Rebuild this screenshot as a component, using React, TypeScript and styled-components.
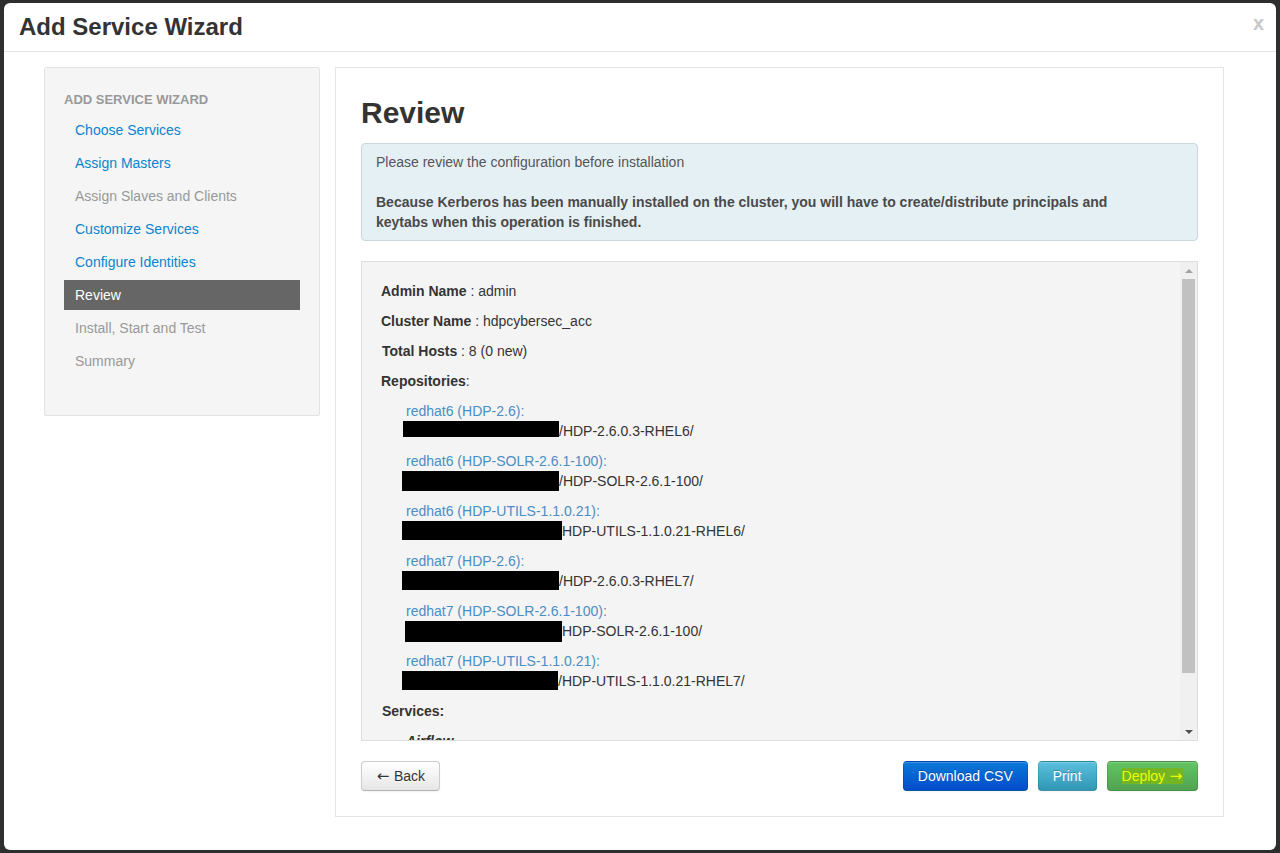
import React from 'react';
import styled, { createGlobalStyle, css } from 'styled-components';

const GlobalStyle = createGlobalStyle`
  html, body { margin: 0; padding: 0; }
  body {
    background: #2e2e2e;
    font-family: "Liberation Sans", Arial, Helvetica, sans-serif;
    font-size: 14px;
    line-height: 20px;
    color: #333;
  }
  * { box-sizing: border-box; }
`;

const Backdrop = styled.div`
  width: 1280px;
  height: 853px;
  padding: 3px 4px 3px 4px;
  display: flex;
`;

const Modal = styled.div`
  flex: 1;
  background: #fff;
  border-radius: 6px;
  display: flex;
  flex-direction: column;
  overflow: hidden;
`;

const Header = styled.header`
  display: flex;
  justify-content: space-between;
  align-items: flex-start;
  padding: 9px 12px 9px 15px;
  border-bottom: 1px solid #e5e5e5;
`;

const Title = styled.h3`
  margin: 0;
  font-size: 24px;
  line-height: 30px;
  font-weight: bold;
  color: #333;
`;

const Close = styled.span`
  font-size: 20px;
  line-height: 22px;
  font-weight: bold;
  color: #c8c8c8;
`;

const Body = styled.div`
  flex: 1;
  display: grid;
  grid-template-columns: 276px 889px;
  column-gap: 15px;
  align-items: start;
  padding: 15px 0 0 40px;
`;

const Well = styled.nav`
  background: #f5f5f5;
  border: 1px solid #e3e3e3;
  border-radius: 2px;
  padding: 19px 19px 39px;
  display: flex;
  flex-direction: column;
  gap: 3px;
`;

const NavHeader = styled.div`
  font-size: 13px;
  font-weight: bold;
  text-transform: uppercase;
  color: #999;
  line-height: 20px;
  padding: 3px 0 1px;
  margin-bottom: 1px;
`;

type NavState = 'link' | 'disabled' | 'active';

const NavItem = styled.div<{ $state: NavState }>`
  height: 30px;
  padding: 5px 11px;
  line-height: 20px;
  font-size: 14px;
  ${({ $state }) =>
    $state === 'active'
      ? css`background: #666; color: #fff;`
      : $state === 'link'
      ? css`color: #0a84cf;`
      : css`color: #999;`}
`;

const Panel = styled.section`
  border: 1px solid #e5e5e5;
  background: #fff;
  padding: 25px;
`;

const PageTitle = styled.h2`
  margin: 0 0 10px;
  font-size: 30px;
  line-height: 40px;
  font-weight: bold;
  color: #333;
`;

const Alert = styled.div`
  background: #e5f0f5;
  border: 1px solid #c9d7de;
  border-radius: 4px;
  padding: 8px 35px 8px 14px;
  color: #555;
  margin-bottom: 20px;
  b { color: #4a4a4a; }
`;

const ReviewBox = styled.div`
  height: 480px;
  display: flex;
  border: 1px solid #dedede;
  background: #f4f4f4;
  overflow: hidden;
`;

const ReviewContent = styled.div`
  flex: 1;
  overflow: hidden;
  padding: 9px 19px;
`;

const Row = styled.p<{ $shift?: number }>`
  margin: 10px 0;
  line-height: 20px;
  padding-left: ${({ $shift }) => $shift || 0}px;
  b { font-weight: bold; color: #333; }
`;

const Indent = styled.div`
  padding-left: 25px;
`;

const RepoEntry = styled.div`
  margin: 10px 0;
`;

const RepoLink = styled.div`
  color: #4a8ec4;
  line-height: 20px;
`;

const PathLine = styled.div`
  display: flex;
  align-items: flex-start;
  height: 20px;
  line-height: 20px;
  color: #333;
`;

const Redact = styled.span<{ $w: number; $h: number; $dx: number }>`
  display: block;
  flex: none;
  background: #000;
  width: ${({ $w }) => $w}px;
  height: ${({ $h }) => $h}px;
  margin-left: ${({ $dx }) => $dx}px;
`;

const Scrollbar = styled.div`
  width: 17px;
  flex: none;
  background: #f0f0f0;
  display: flex;
  flex-direction: column;
  align-items: center;
`;

const ArrowBtn = styled.div`
  width: 17px;
  height: 17px;
  display: flex;
  align-items: center;
  justify-content: center;
`;

const Triangle = styled.span<{ $dir: 'up' | 'down'; $color: string }>`
  width: 0;
  height: 0;
  border-left: 4px solid transparent;
  border-right: 4px solid transparent;
  ${({ $dir, $color }) =>
    $dir === 'up'
      ? css`border-bottom: 4px solid ${$color};`
      : css`border-top: 4px solid ${$color};`}
`;

const Thumb = styled.div`
  width: 13px;
  height: 394px;
  background: #c1c1c1;
`;

const Track = styled.div`
  flex: 1;
`;

const ButtonRow = styled.div`
  margin-top: 20px;
  display: flex;
  justify-content: space-between;
`;

const ButtonGroup = styled.div`
  display: flex;
  gap: 10px;
`;

type Variant = 'default' | 'primary' | 'info' | 'success';

const variants: Record<Variant, ReturnType<typeof css>> = {
  default: css`
    color: #333;
    background-image: linear-gradient(to bottom, #ffffff, #e6e6e6);
    border-color: #cccccc #cccccc #b3b3b3;
    text-shadow: 0 1px 1px rgba(255, 255, 255, 0.75);
  `,
  primary: css`
    color: #fff;
    background-image: linear-gradient(to bottom, #0a79d6, #004ccb);
    border-color: rgba(0, 0, 0, 0.1) rgba(0, 0, 0, 0.1) rgba(0, 0, 0, 0.25);
    text-shadow: 0 -1px 0 rgba(0, 0, 0, 0.25);
  `,
  info: css`
    color: #fff;
    background-image: linear-gradient(to bottom, #5bc0de, #2f96b4);
    border-color: rgba(0, 0, 0, 0.1) rgba(0, 0, 0, 0.1) rgba(0, 0, 0, 0.25);
    text-shadow: 0 -1px 0 rgba(0, 0, 0, 0.25);
  `,
  success: css`
    color: #fff;
    background-image: linear-gradient(to bottom, #62c462, #51a351);
    border-color: rgba(0, 0, 0, 0.1) rgba(0, 0, 0, 0.1) rgba(0, 0, 0, 0.25);
  `,
};

const Button = styled.button<{ $variant: Variant }>`
  font-family: "Liberation Sans", Arial, Helvetica, sans-serif;
  font-size: 14px;
  line-height: 20px;
  height: 30px;
  padding: 4px 14px;
  border: 1px solid;
  border-radius: 4px;
  box-shadow: inset 0 1px 0 rgba(255, 255, 255, 0.2), 0 1px 2px rgba(0, 0, 0, 0.05);
  cursor: pointer;
  white-space: nowrap;
  ${({ $variant }) => variants[$variant]}
`;

const Arrow = styled.span`
  display: inline-block;
  width: 14px;
  text-align: center;
  font-family: "DejaVu Sans", "Liberation Sans", sans-serif;
  font-size: 15px;
  line-height: 1;
`;

const Highlight = styled.span`
  background: #74b524;
  color: #e9ff00;
`;

const navItems: { label: string; state: NavState }[] = [
  { label: 'Choose Services', state: 'link' },
  { label: 'Assign Masters', state: 'link' },
  { label: 'Assign Slaves and Clients', state: 'disabled' },
  { label: 'Customize Services', state: 'link' },
  { label: 'Configure Identities', state: 'link' },
  { label: 'Review', state: 'active' },
  { label: 'Install, Start and Test', state: 'disabled' },
  { label: 'Summary', state: 'disabled' },
];

const repos = [
  { os: 'redhat6', name: 'HDP-2.6', path: '/HDP-2.6.0.3-RHEL6/', w: 156, h: 16, dx: -3 },
  { os: 'redhat6', name: 'HDP-SOLR-2.6.1-100', path: '/HDP-SOLR-2.6.1-100/', w: 157, h: 20, dx: -4 },
  { os: 'redhat6', name: 'HDP-UTILS-1.1.0.21', path: 'HDP-UTILS-1.1.0.21-RHEL6/', w: 160, h: 19, dx: -4 },
  { os: 'redhat7', name: 'HDP-2.6', path: '/HDP-2.6.0.3-RHEL7/', w: 157, h: 19, dx: -4 },
  { os: 'redhat7', name: 'HDP-SOLR-2.6.1-100', path: 'HDP-SOLR-2.6.1-100/', w: 157, h: 21, dx: -1 },
  { os: 'redhat7', name: 'HDP-UTILS-1.1.0.21', path: '/HDP-UTILS-1.1.0.21-RHEL7/', w: 156, h: 19, dx: -4 },
];

export default function App() {
  return (
    <>
      <GlobalStyle />
      <Backdrop>
        <Modal>
          <Header>
            <Title>Add Service Wizard</Title>
            <Close>x</Close>
          </Header>
          <Body>
            <Well>
              <NavHeader>Add Service Wizard</NavHeader>
              {navItems.map((item) => (
                <NavItem key={item.label} $state={item.state}>
                  {item.label}
                </NavItem>
              ))}
            </Well>
            <Panel>
              <PageTitle>Review</PageTitle>
              <Alert>
                Please review the configuration before installation
                <br />
                <br />
                <b>
                  Because Kerberos has been manually installed on the cluster, you will have to
                  create/distribute principals and keytabs when this operation is finished.
                </b>
              </Alert>
              <ReviewBox>
                <ReviewContent>
                  <Row>
                    <b>Admin Name</b> : admin
                  </Row>
                  <Row>
                    <b>Cluster Name</b> : hdpcybersec_acc
                  </Row>
                  <Row $shift={1}>
                    <b>Total Hosts</b> : 8 (0 new)
                  </Row>
                  <Row>
                    <b>Repositories</b>:
                  </Row>
                  <Indent>
                    {repos.map((r, i) => (
                      <RepoEntry key={i}>
                        <RepoLink>
                          {r.os} ({r.name}):
                        </RepoLink>
                        <PathLine>
                          <Redact $w={r.w} $h={r.h} $dx={r.dx} />
                          {r.path}
                        </PathLine>
                      </RepoEntry>
                    ))}
                  </Indent>
                  <Row $shift={1}>
                    <b>Services:</b>
                  </Row>
                  <Indent>
                    <Row>
                      <b>
                        <i>Airflow</i>
                      </b>
                    </Row>
                    <Row>Version : 1.8.0</Row>
                  </Indent>
                </ReviewContent>
                <Scrollbar>
                  <ArrowBtn>
                    <Triangle $dir="up" $color="#a3a3a3" />
                  </ArrowBtn>
                  <Thumb />
                  <Track />
                  <ArrowBtn>
                    <Triangle $dir="down" $color="#505050" />
                  </ArrowBtn>
                </Scrollbar>
              </ReviewBox>
              <ButtonRow>
                <Button $variant="default">
                  <Arrow>←</Arrow> Back
                </Button>
                <ButtonGroup>
                  <Button $variant="primary">Download CSV</Button>
                  <Button $variant="info">Print</Button>
                  <Button $variant="success">
                    <Highlight>
                      Deploy <Arrow>→</Arrow>
                    </Highlight>
                  </Button>
                </ButtonGroup>
              </ButtonRow>
            </Panel>
          </Body>
        </Modal>
      </Backdrop>
    </>
  );
}
